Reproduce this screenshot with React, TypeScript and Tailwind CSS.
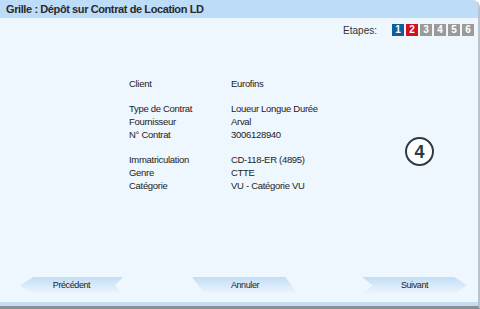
import React from "react";

const rowsA = [["Client", "Eurofins"]];
const rowsB = [
  ["Type de Contrat", "Loueur Longue Durée"],
  ["Fournisseur", "Arval"],
  ["N° Contrat", "3006128940"],
];
const rowsC = [
  ["Immatriculation", "CD-118-ER (4895)"],
  ["Genre", "CTTE"],
  ["Catégorie", "VU - Catégorie VU"],
];

function Group({ rows }: { rows: string[][] }) {
  return (
    <div className="flex flex-col">
      {rows.map(([k, v]) => (
        <div key={k} className="flex h-[13px] items-center leading-[13px]">
          <div className="w-[102px]">{k}</div>
          <div>{v}</div>
        </div>
      ))}
    </div>
  );
}

export default function App() {
  const steps = [
    { n: "1", c: "bg-[#0f5f9c]" },
    { n: "2", c: "bg-[#d2101e]" },
    { n: "3", c: "bg-[#9a9a9a]" },
    { n: "4", c: "bg-[#9a9a9a]" },
    { n: "5", c: "bg-[#9a9a9a]" },
    { n: "6", c: "bg-[#9a9a9a]" },
  ];
  return (
    <div
      className="w-[480px] h-[309px] flex flex-col bg-[#eef6fe] text-[#222] border-r-2 border-b-[3px] border-r-[#b9c3cc] border-b-[#8a8f94] rounded-tr-[8px] overflow-hidden"
      style={{ fontFamily: '"Liberation Sans", Arial, sans-serif' }}
    >
      <div className="h-[18px] bg-[#bcdcf8] flex items-center pl-[6px] text-[11px] tracking-[-0.4px] font-bold text-[#2a2a2a]">
        Grille : Dépôt sur Contrat de Location LD
      </div>
      <div className="flex-1 relative flex flex-col">
        <div className="flex justify-end items-center pt-[3px] pr-[4px] h-[18px] box-content">
          <span className="text-[10px] mr-[15px] text-[#333]">Etapes:</span>
          <div className="flex gap-[2px]">
            {steps.map((s) => (
              <div
                key={s.n}
                className={`${s.c} w-[12px] h-[12px] flex items-center justify-center text-white text-[10px] font-bold leading-none`}
              >
                {s.n}
              </div>
            ))}
          </div>
        </div>
        <div className="flex">
          <div className="pl-[129px] pt-[38px] text-[9.5px] tracking-[-0.3px] flex flex-col gap-[12px] w-[380px]">
            <Group rows={rowsA} />
            <Group rows={rowsB} />
            <Group rows={rowsC} />
          </div>
          <div className="pt-[98px] pl-[25px]">
            <div className="w-[29px] h-[29px] rounded-full border-[2.5px] border-[#2c3b47] bg-white flex items-center justify-center text-[18px] font-bold text-[#2c3b47] leading-none">
              4
            </div>
          </div>
        </div>
        <div className="mt-auto mb-[8px] flex items-center pl-[20px]">
          <div className="shrink-0 w-[103px] h-[17px] flex items-center justify-center text-[9px] tracking-[-0.4px] text-[#222] bg-gradient-to-b from-[#c2ddf6] to-[#eef6fe] [clip-path:polygon(0_50%,13%_0,100%_0,92%_50%,100%_100%,13%_100%)]">
            Précédent
          </div>
          <div className="shrink-0 ml-[69px] w-[106px] h-[17px] flex items-center justify-center text-[9px] tracking-[-0.4px] text-[#222] bg-gradient-to-b from-[#c2ddf6] to-[#eef6fe] [clip-path:polygon(0_0,88%_0,100%_100%,12%_100%)]">
            Annuler
          </div>
          <div className="shrink-0 ml-[64px] w-[105px] h-[17px] flex items-center justify-center text-[9px] tracking-[-0.4px] text-[#222] bg-gradient-to-b from-[#c2ddf6] to-[#eef6fe] [clip-path:polygon(0_0,88%_0,100%_50%,88%_100%,0_100%,10%_50%)]">
            Suivant
          </div>
        </div>
        <div className="h-[4px] bg-[#c3ddf5]"></div>
      </div>
    </div>
  );
}
